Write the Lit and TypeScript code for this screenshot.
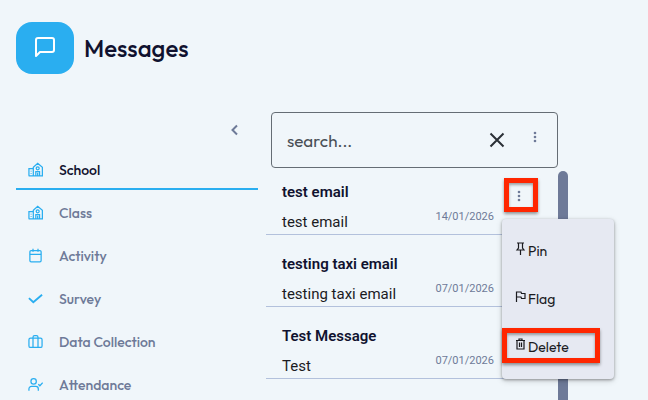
import { LitElement, html, svg, css, nothing } from "lit";
import { customElement } from "lit/decorators.js";
import { classMap } from "lit/directives/class-map.js";

const school = svg`<path d="M1.5 22V10.5H8.5M1 22H23V8.5L15.5 2L8.5 8.5V22M12.5 22V15.5H18.5V22M15.5 17V22M5 14V15M5 18V19"/><circle cx="15.5" cy="10" r="2.4"/>`;
const calendar = svg`<rect x="3" y="4" width="18" height="18" rx="2"/><path d="M8 1V6M16 1V6M3 10H21"/>`;
const check = svg`<path stroke-width="3" d="M1.5 11.5L8.5 18L22.5 6"/>`;
const briefcase = svg`<rect x="1.5" y="6.5" width="21" height="15" rx="2.5"/><path d="M8 21.5V5A2.5 2.5 0 0 1 10.5 2.5H13.5A2.5 2.5 0 0 1 16 5V21.5"/>`;
const userCheck = svg`<circle cx="9" cy="7" r="4.3"/><path d="M1.5 22V19A4 4 0 0 1 5.5 15H12.5A4 4 0 0 1 16.5 19V22M16.5 11.5L19 14L23.5 9"/>`;

const sections = [
  { label: "School", icon: school, current: true },
  { label: "Class", icon: school },
  { label: "Activity", icon: calendar },
  { label: "Survey", icon: check },
  { label: "Data Collection", icon: briefcase },
  { label: "Attendance", icon: userCheck },
];

const messages = [
  { title: "test email", body: "test email", date: "14/01/2026", open: true },
  { title: "testing taxi email", body: "testing taxi email", date: "07/01/2026" },
  { title: "Test Message", body: "Test", date: "07/01/2026" },
];

const pin = svg`<path d="M2 1H9M3.5 1V6L2 8H9L7.5 6V1M5.5 8V13"/>`;
const flag = svg`<path d="M1.5 12V2H6L6.5 3.5H10V8.5H6.5L6 7H1.5"/>`;
const trash = svg`<path d="M1 2.5H10M4 2.5V1H7V2.5M2 2.5V11H9V2.5M4.5 4.5V9M6.5 4.5V9"/>`;

const dots = html`<svg class="dots" viewBox="0 0 4 12" aria-hidden="true">
  <circle cx="2" cy="2" r="1.3" /><circle cx="2" cy="6" r="1.3" /><circle cx="2" cy="10" r="1.3" />
</svg>`;

@customElement("message-menu")
export class MessageMenu extends LitElement {
  static styles = css`
    :host {
      display: block;
      width: 112px;
      padding: 8px 0;
      box-sizing: border-box;
      border-radius: 4px;
      background: #e6e9f2;
      box-shadow: 0 1px 3px rgba(0, 0, 0, 0.35), 0 2px 6px rgba(0, 0, 0, 0.15);
    }
    .item {
      position: relative;
      display: flex;
      align-items: center;
      gap: 2px;
      width: 100%;
      height: 48px;
      padding: 0 13px;
      border: 0;
      background: none;
      color: #1b1b1f;
      font: inherit;
      font-size: 14px;
    }
    .icon {
      width: 11px;
      height: 14px;
      margin-bottom: 4px;
      fill: none;
      stroke: currentColor;
      stroke-width: 1.2;
    }
    .marked::after {
      content: "";
      position: absolute;
      inset: 5px 14px 8px 0;
      border: 5px solid #ff2600;
      box-shadow: 0 2px 3px rgba(0, 0, 0, 0.4), inset 0 2px 3px rgba(0, 0, 0, 0.35);
    }
  `;

  private item(label: string, icon: unknown, marked = false) {
    return html`<button class=${classMap({ item: true, marked })} role="menuitem">
      <svg class="icon" viewBox="0 0 11 14" aria-hidden="true">${icon}</svg>${label}
    </button>`;
  }

  render() {
    return html`<div role="menu">
      ${this.item("Pin", pin)}${this.item("Flag", flag)}${this.item("Delete", trash, true)}
    </div>`;
  }
}

@customElement("app-root")
export class AppRoot extends LitElement {
  static styles = css`
    :host {
      display: flex;
      flex-direction: column;
      height: 100vh;
      box-sizing: border-box;
      padding: 22px 16px 0;
      overflow: hidden;
      background: #f0f6fa;
      color: #10122f;
      font-family: Outfit, Lato, sans-serif;
    }
    button {
      border: 0;
      padding: 0;
      background: none;
      color: inherit;
      font: inherit;
    }
    .header {
      display: flex;
      align-items: center;
      gap: 10px;
      margin-bottom: 38px;
    }
    .badge {
      display: grid;
      place-items: center;
      width: 58px;
      height: 52px;
      border-radius: 16px;
      background: #2aaef0;
    }
    .badge-icon {
      width: 24px;
      height: 24px;
      margin-bottom: 2px;
      fill: none;
      stroke: #fff;
      stroke-width: 2;
      stroke-linejoin: round;
    }
    .title {
      margin: 0;
      font-size: 24px;
      font-weight: 500;
    }
    .columns {
      flex: 1;
      min-height: 0;
      display: grid;
      grid-template-columns: 242fr 302fr 56fr;
      gap: 8px;
    }
    .collapse {
      display: flex;
      justify-content: flex-end;
      align-items: center;
      width: 100%;
      height: 35px;
      padding-right: 17px;
      color: #6e7a98;
    }
    .chevron {
      width: 12px;
      height: 12px;
      fill: none;
      stroke: currentColor;
      stroke-width: 2;
    }
    .link {
      display: flex;
      align-items: center;
      gap: 16px;
      height: 43px;
      box-sizing: border-box;
      padding: 4px 0 0 12px;
      border-bottom: 2px solid transparent;
      color: #6e7a98;
      font-size: 14px;
      font-weight: 500;
      text-decoration: none;
    }
    .current {
      border-color: #2aaef0;
      color: #10122f;
    }
    .link-icon {
      width: 15px;
      height: 15px;
      fill: none;
      stroke: #2aaef0;
      stroke-width: 2;
    }
    .inbox {
      display: flex;
      flex-direction: column;
      gap: 3px;
      min-width: 0;
      min-height: 0;
    }
    .search {
      display: flex;
      align-items: center;
      height: 56px;
      box-sizing: border-box;
      margin: 0 10px 0 5px;
      padding: 0 20px 0 15px;
      border: 1px solid #656d74;
      border-radius: 4px;
    }
    .field {
      flex: 1;
      min-width: 0;
      padding: 1px 0 0;
      border: 0;
      outline: 0;
      background: none;
      font: inherit;
      font-size: 17px;
    }
    .field::placeholder {
      color: #4a5056;
      opacity: 1;
    }
    .clear {
      display: flex;
      margin-right: 28px;
    }
    .clear-icon {
      width: 16px;
      height: 16px;
      stroke: #2b3036;
      stroke-width: 2;
    }
    .dots {
      display: block;
      width: 4px;
      height: 12px;
      fill: #6e7a98;
    }
    .more {
      margin-bottom: 6px;
    }
    .scroller {
      flex: 1;
      min-height: 0;
      display: flex;
    }
    .list {
      flex: 1;
      display: flex;
      flex-direction: column;
      gap: 17px;
      margin: 0;
      padding: 9px 0 0;
      list-style: none;
      font-family: Roboto, sans-serif;
      font-size: 15px;
      line-height: 24px;
    }
    .thumb {
      width: 10px;
      border-radius: 5px 5px 0 0;
      background: #6e7a98;
    }
    .row {
      display: flex;
      padding-left: 16px;
      border-bottom: 1px solid #b3c1dc;
    }
    .text {
      flex: 1;
    }
    .subject {
      margin: 0 0 6px;
      font-size: 15px;
      font-weight: 600;
    }
    .body {
      margin: 0;
      color: #1b1b1f;
    }
    .date {
      align-self: flex-end;
      padding-bottom: 5px;
      color: #6e7a98;
      font-size: 11px;
    }
    .actions {
      position: relative;
      width: 64px;
    }
    .row-more {
      display: grid;
      place-items: center;
      width: 34px;
      height: 34px;
      box-sizing: border-box;
      margin: -2px 0 0 10px;
      padding: 2px 4px 0 0;
    }
    .marked::after {
      content: "";
      position: absolute;
      top: -2px;
      left: 10px;
      width: 24px;
      height: 24px;
      border: 5px solid #ff2600;
      box-shadow: 0 2px 3px rgba(0, 0, 0, 0.4), inset 0 2px 3px rgba(0, 0, 0, 0.35);
    }
    .menu {
      position: absolute;
      z-index: 1;
      top: 39px;
      left: 8px;
      font-family: Outfit, Lato, sans-serif;
    }
  `;

  render() {
    return html`
      <header class="header">
        <div class="badge">
          <svg class="badge-icon" viewBox="0 0 24 24" aria-hidden="true">
            <path d="M21 15a2 2 0 0 1-2 2H7l-4 4V5a2 2 0 0 1 2-2h14a2 2 0 0 1 2 2z" />
          </svg>
        </div>
        <h1 class="title">Messages</h1>
      </header>
      <div class="columns">
        <nav>
          <button class="collapse" aria-label="Collapse sections">
            <svg class="chevron" viewBox="0 0 12 12"><path d="M8 1.5L3.5 6L8 10.5" /></svg>
          </button>
          ${sections.map(
            (s) => html`<a href="#" class=${classMap({ link: true, current: !!s.current })}>
              <svg class="link-icon" viewBox="0 0 24 24" aria-hidden="true">${s.icon}</svg>${s.label}
            </a>`
          )}
        </nav>
        <main class="inbox">
          <div class="search">
            <input class="field" type="text" placeholder="search..." aria-label="Search messages" />
            <button class="clear" aria-label="Clear search">
              <svg class="clear-icon" viewBox="0 0 16 16"><path d="M1.5 1.5L14.5 14.5M14.5 1.5L1.5 14.5" /></svg>
            </button>
            <button class="more" aria-label="Search options">${dots}</button>
          </div>
          <div class="scroller">
            <ul class="list">
              ${messages.map(
                (m) => html`<li class="row">
                  <div class="text">
                    <h2 class="subject">${m.title}</h2>
                    <p class="body">${m.body}</p>
                  </div>
                  <time class="date">${m.date}</time>
                  <div class=${classMap({ actions: true, marked: !!m.open })}>
                    <button class="row-more" aria-label="Message options">${dots}</button>
                    ${m.open ? html`<message-menu class="menu"></message-menu>` : nothing}
                  </div>
                </li>`
              )}
            </ul>
            <div class="thumb"></div>
          </div>
        </main>
      </div>
    `;
  }
}
